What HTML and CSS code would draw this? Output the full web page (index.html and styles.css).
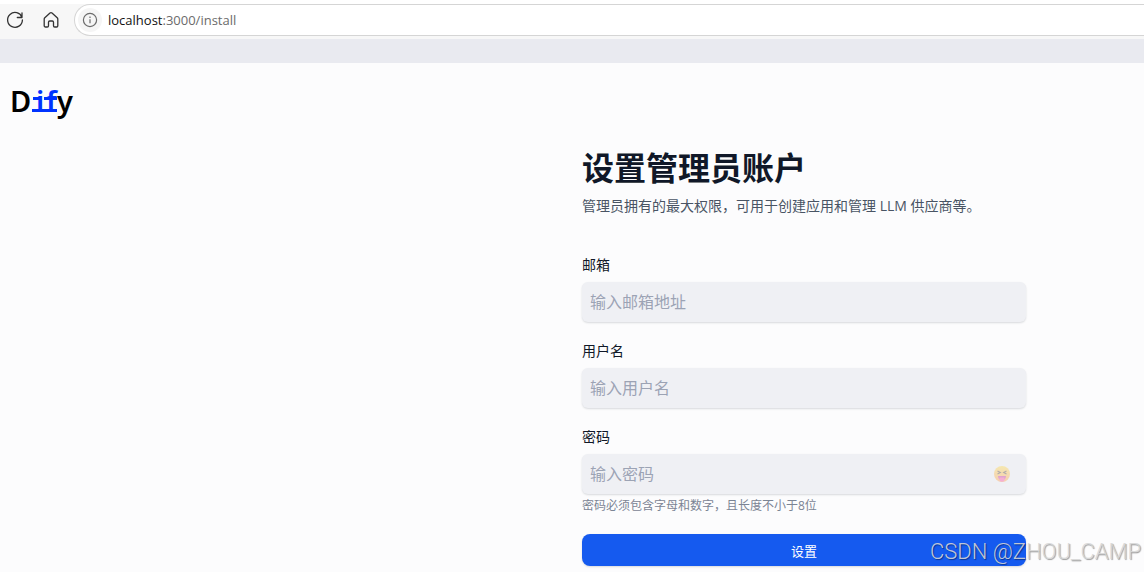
FILE: index.html
```html
<!DOCTYPE html>
<html lang="zh-CN">
<head>
    <meta charset="UTF-8">
    <title>设置管理员账户 - Dify</title>
    <link rel="stylesheet" href="styles.css">
</head>
<body>
    <div class="toolbar">
        <button class="tool" type="button" aria-label="刷新">
            <svg width="20" height="20" viewBox="0 0 20 20" fill="none" stroke="#333" stroke-width="1.3" stroke-linecap="round" stroke-linejoin="round">
                <path d="M17 7.5A7.4 7.4 0 1 0 17.4 10M17 2.8v4.7h-4.7"/>
            </svg>
        </button>
        <button class="tool" type="button" aria-label="主页">
            <svg width="20" height="20" viewBox="0 0 20 20" fill="none" stroke="#333" stroke-width="1.3" stroke-linejoin="round">
                <path d="M3.200 9.200c0-.6.2-1 .6-1.400L9 3.100c.6-.5 1.400-.5 2 0l5.200 4.700c.4.4.6.8.6 1.400v6.600c0 .7-.5 1.200-1.200 1.200h-1.900c-.7 0-1.200-.5-1.200-1.200v-3.600c0-.7-.5-1.200-1.200-1.200H8.700c-.7 0-1.200.5-1.200 1.200v3.600c0 .7-.5 1.200-1.200 1.200H4.400c-.7 0-1.200-.5-1.200-1.200z"/>
            </svg>
        </button>
        <div class="address">
            <span class="info">
                <svg width="16" height="16" viewBox="0 0 16 16" fill="none" stroke="#6b6b6b" stroke-width="1.2">
                    <circle cx="8" cy="8" r="6.6"/>
                    <path d="M8 7.200v4M8 4.500v1.400"/>
                </svg>
            </span>
            <span class="url"><b>localhost</b>:3000/install</span>
        </div>
    </div>
    <div class="strip"></div>

    <div class="page">
        <header class="header">
            <a class="logo" href="#" aria-label="Dify">
                <svg width="70" height="44" viewBox="0 0 70 44">
                    <text class="logo-text" x="0" y="31">D</text>
                    <text class="logo-text blue" x="26" y="31">i</text>
                    <text class="logo-text blue" x="36" y="31">f</text>
                    <text class="logo-text" x="47" y="31">y</text>
                    <!-- slab serifs of "if" -->
                    <path d="M23 16h7v3h-7zM34 16h13v3H34zM22 28h25v3H22z" fill="#0033ff"/>
                </svg>
            </a>
        </header>

        <main class="content">
            <form class="form">
                <h1>设置管理员账户</h1>
                <p class="desc">管理员拥有的最大权限，可用于创建应用和管理 LLM 供应商等。</p>

                <div class="field">
                    <label for="email">邮箱</label>
                    <input id="email" type="email" placeholder="输入邮箱地址">
                </div>
                <div class="field">
                    <label for="name">用户名</label>
                    <input id="name" type="text" placeholder="输入用户名">
                </div>
                <div class="field">
                    <label for="password">密码</label>
                    <div class="password">
                        <input id="password" type="password" placeholder="输入密码">
                        <button class="toggle" type="button" aria-label="显示密码">
                            <svg width="16" height="16" viewBox="0 0 16 16">
                                <defs>
                                    <linearGradient id="face" x1="0" y1="0" x2="0" y2="1">
                                        <stop offset="0" stop-color="#ffdc4a"/>
                                        <stop offset="1" stop-color="#ff9d4d"/>
                                    </linearGradient>
                                </defs>
                                <circle cx="8" cy="8" r="8" fill="url(#face)"/>
                                <path d="M3.500 5l2.800 1.500L3.500 8M12.500 5L9.700 6.500 12.500 8" fill="none" stroke="#5c4a40" stroke-width="1.200"/>
                                <path d="M4 10h8c0 2-1.200 3.200-2 3.600H6C5.200 13.200 4 12 4 10z" fill="#c8329a"/>
                                <path d="M5.500 11.500h5v2.200a2.500 2 0 0 1-5 0z" fill="#ff4fa2"/>
                            </svg>
                        </button>
                    </div>
                    <p class="hint">密码必须包含字母和数字，且长度不小于8位</p>
                </div>

                <button class="submit" type="submit">设置</button>
            </form>
        </main>
    </div>
    <div class="watermark">CSDN @ZHOU_CAMP</div>
</body>
</html>
```
FILE: styles.css
```css
* {
    box-sizing: border-box;
}
body {
    margin: 0;
    min-height: 100vh;
    position: relative;
    overflow: hidden;
    background: #fcfcfd;
    font-family: "Open Sans", "Noto Sans CJK SC", sans-serif;
    color: #101828;
}
button {
    border: none;
    background: none;
    padding: 0;
    cursor: pointer;
}
h1, p {
    margin: 0;
}

/* browser bar */
.toolbar {
    display: flex;
    align-items: center;
    height: 39px;
    padding: 0 0 3px 5px;
    border-top: 4px solid #fff;
    background: #f7f7f7;
}
.tool {
    width: 20px;
    height: 20px;
    margin-right: 16px;
}
.tool svg, .info svg, .logo svg, .toggle svg {
    display: block;
}
.address {
    flex: 1;
    display: flex;
    align-items: center;
    gap: 6px;
    height: 32px;
    margin-left: -3px;
    padding-left: 3px;
    background: #fff;
    border: 1px solid #d5d5d5;
    border-right: none;
    border-radius: 16px 0 0 16px;
}
.info {
    padding: 4px;
    border-radius: 50%;
    background: #f5f5f5;
}
.url {
    font-size: 13px;
    color: #6b6b6b;
}
.url b {
    font-weight: normal;
    color: #111;
}
.strip {
    height: 24px;
    background: #e9eaf0;
}

/* install page */
.header {
    padding: 18px 10px 0;
}
.logo {
    display: inline-block;
    vertical-align: top;
}
.logo-text {
    font: 600 29px "Noto Sans", sans-serif;
}
.logo-text.blue {
    fill: #0033ff;
}
.content {
    display: flex;
    justify-content: center;
    padding: 19px 0 0 464px;
}
.form {
    width: 444px;
}
h1 {
    font-size: 32px;
    line-height: 48px;
    font-weight: 700;
}
.desc {
    margin: 4px 0 38px;
    font-size: 14px;
    line-height: 20px;
    color: #495464;
}
.field {
    margin-bottom: 18px;
}
.field label {
    display: block;
    margin-bottom: 6px;
    font-size: 14px;
    line-height: 22px;
}
.field input {
    display: block;
    width: 100%;
    height: 40px;
    padding: 0 8px;
    border: none;
    border-radius: 6px;
    background: #eff0f4;
    box-shadow: 0 1px 2px rgba(16, 24, 40, 0.15);
    font-family: inherit;
    font-size: 16px;
}
.field input::placeholder {
    color: #9ca3b4;
}
.password {
    position: relative;
}
.toggle {
    position: absolute;
    top: 12px;
    right: 16px;
    opacity: 0.4;
}
.hint {
    padding-top: 2px;
    font-size: 12px;
    line-height: 20px;
    color: #7b8494;
}
.submit {
    width: 100%;
    height: 32px;
    border-radius: 8px;
    background: #155aef;
    box-shadow: 0 1px 2px rgba(16, 24, 40, 0.15);
    color: #fff;
    font-family: inherit;
    font-size: 13px;
}
.watermark {
    position: absolute;
    right: 3px;
    bottom: 6px;
    font-family: Roboto, sans-serif;
    font-weight: 300;
    font-size: 22px;
    line-height: 28px;
    color: rgba(215, 215, 215, 0.9);
    text-shadow: 1px 1px 1px rgba(0, 0, 0, 0.4);
}
```
